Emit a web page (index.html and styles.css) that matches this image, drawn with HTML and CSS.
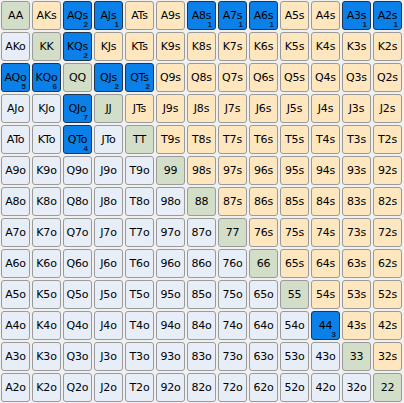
FILE: index.html
```html
<!DOCTYPE html>
<html>
<head>
<meta charset="utf-8">
<link rel="stylesheet" href="styles.css">
</head>
<body>
<div class="grid" id="grid"></div>
<script src="app.js"></script>
</body>
</html>
```

FILE: styles.css
```css
html, body {
  margin: 0;
  padding: 0;
  background: #f0f0f0;
}
.grid {
  display: grid;
  grid-template-columns: repeat(13, 29px);
  grid-auto-rows: 29px;
  gap: 2px;
  padding: 1px;
  width: max-content;
}
.cell {
  position: relative;
  box-sizing: border-box;
  border: 1px solid #9a9a9a;
  border-radius: 3px;
  display: flex;
  align-items: center;
  justify-content: center;
  font-family: "DejaVu Sans", Tahoma, sans-serif;
  font-size: 11px;
  letter-spacing: -0.2px;
  color: #000;
  padding-bottom: 1px;
}
.pair { background: #d2dec8; }
.suited { background: #fee7bf; }
.off { background: #e8eef7; }
.sel {
  background: #0a80e8;
  border-color: #1e3550;
}
.num {
  position: absolute;
  right: 3px;
  bottom: 0px;
  font-family: "Liberation Sans", Arial, sans-serif;
  font-size: 8px;
  font-weight: bold;
  color: #0c1d3a;
  line-height: 8px;
  letter-spacing: 0;
}
```

FILE: app.js
```js
var r = "AKQJT98765432";
var sel = {"AQs":2,"AJs":1,"A8s":1,"A7s":1,"A6s":1,"A3s":1,"A2s":1,"KQs":2,"AQo":5,"KQo":6,"QJs":2,"QTs":2,"QJo":7,"QTo":4,"44":3};
var g = document.getElementById("grid");
for (var i = 0; i < 13; i++) {
  for (var j = 0; j < 13; j++) {
    var t, c;
    if (i === j) { t = r[i] + r[j]; c = "pair"; }
    else if (j > i) { t = r[i] + r[j] + "s"; c = "suited"; }
    else { t = r[j] + r[i] + "o"; c = "off"; }
    var d = document.createElement("div");
    d.className = "cell " + c + (sel[t] ? " sel" : "");
    d.textContent = t;
    if (sel[t]) {
      var n = document.createElement("span");
      n.className = "num";
      n.textContent = sel[t];
      d.appendChild(n);
    }
    g.appendChild(d);
  }
}
```
